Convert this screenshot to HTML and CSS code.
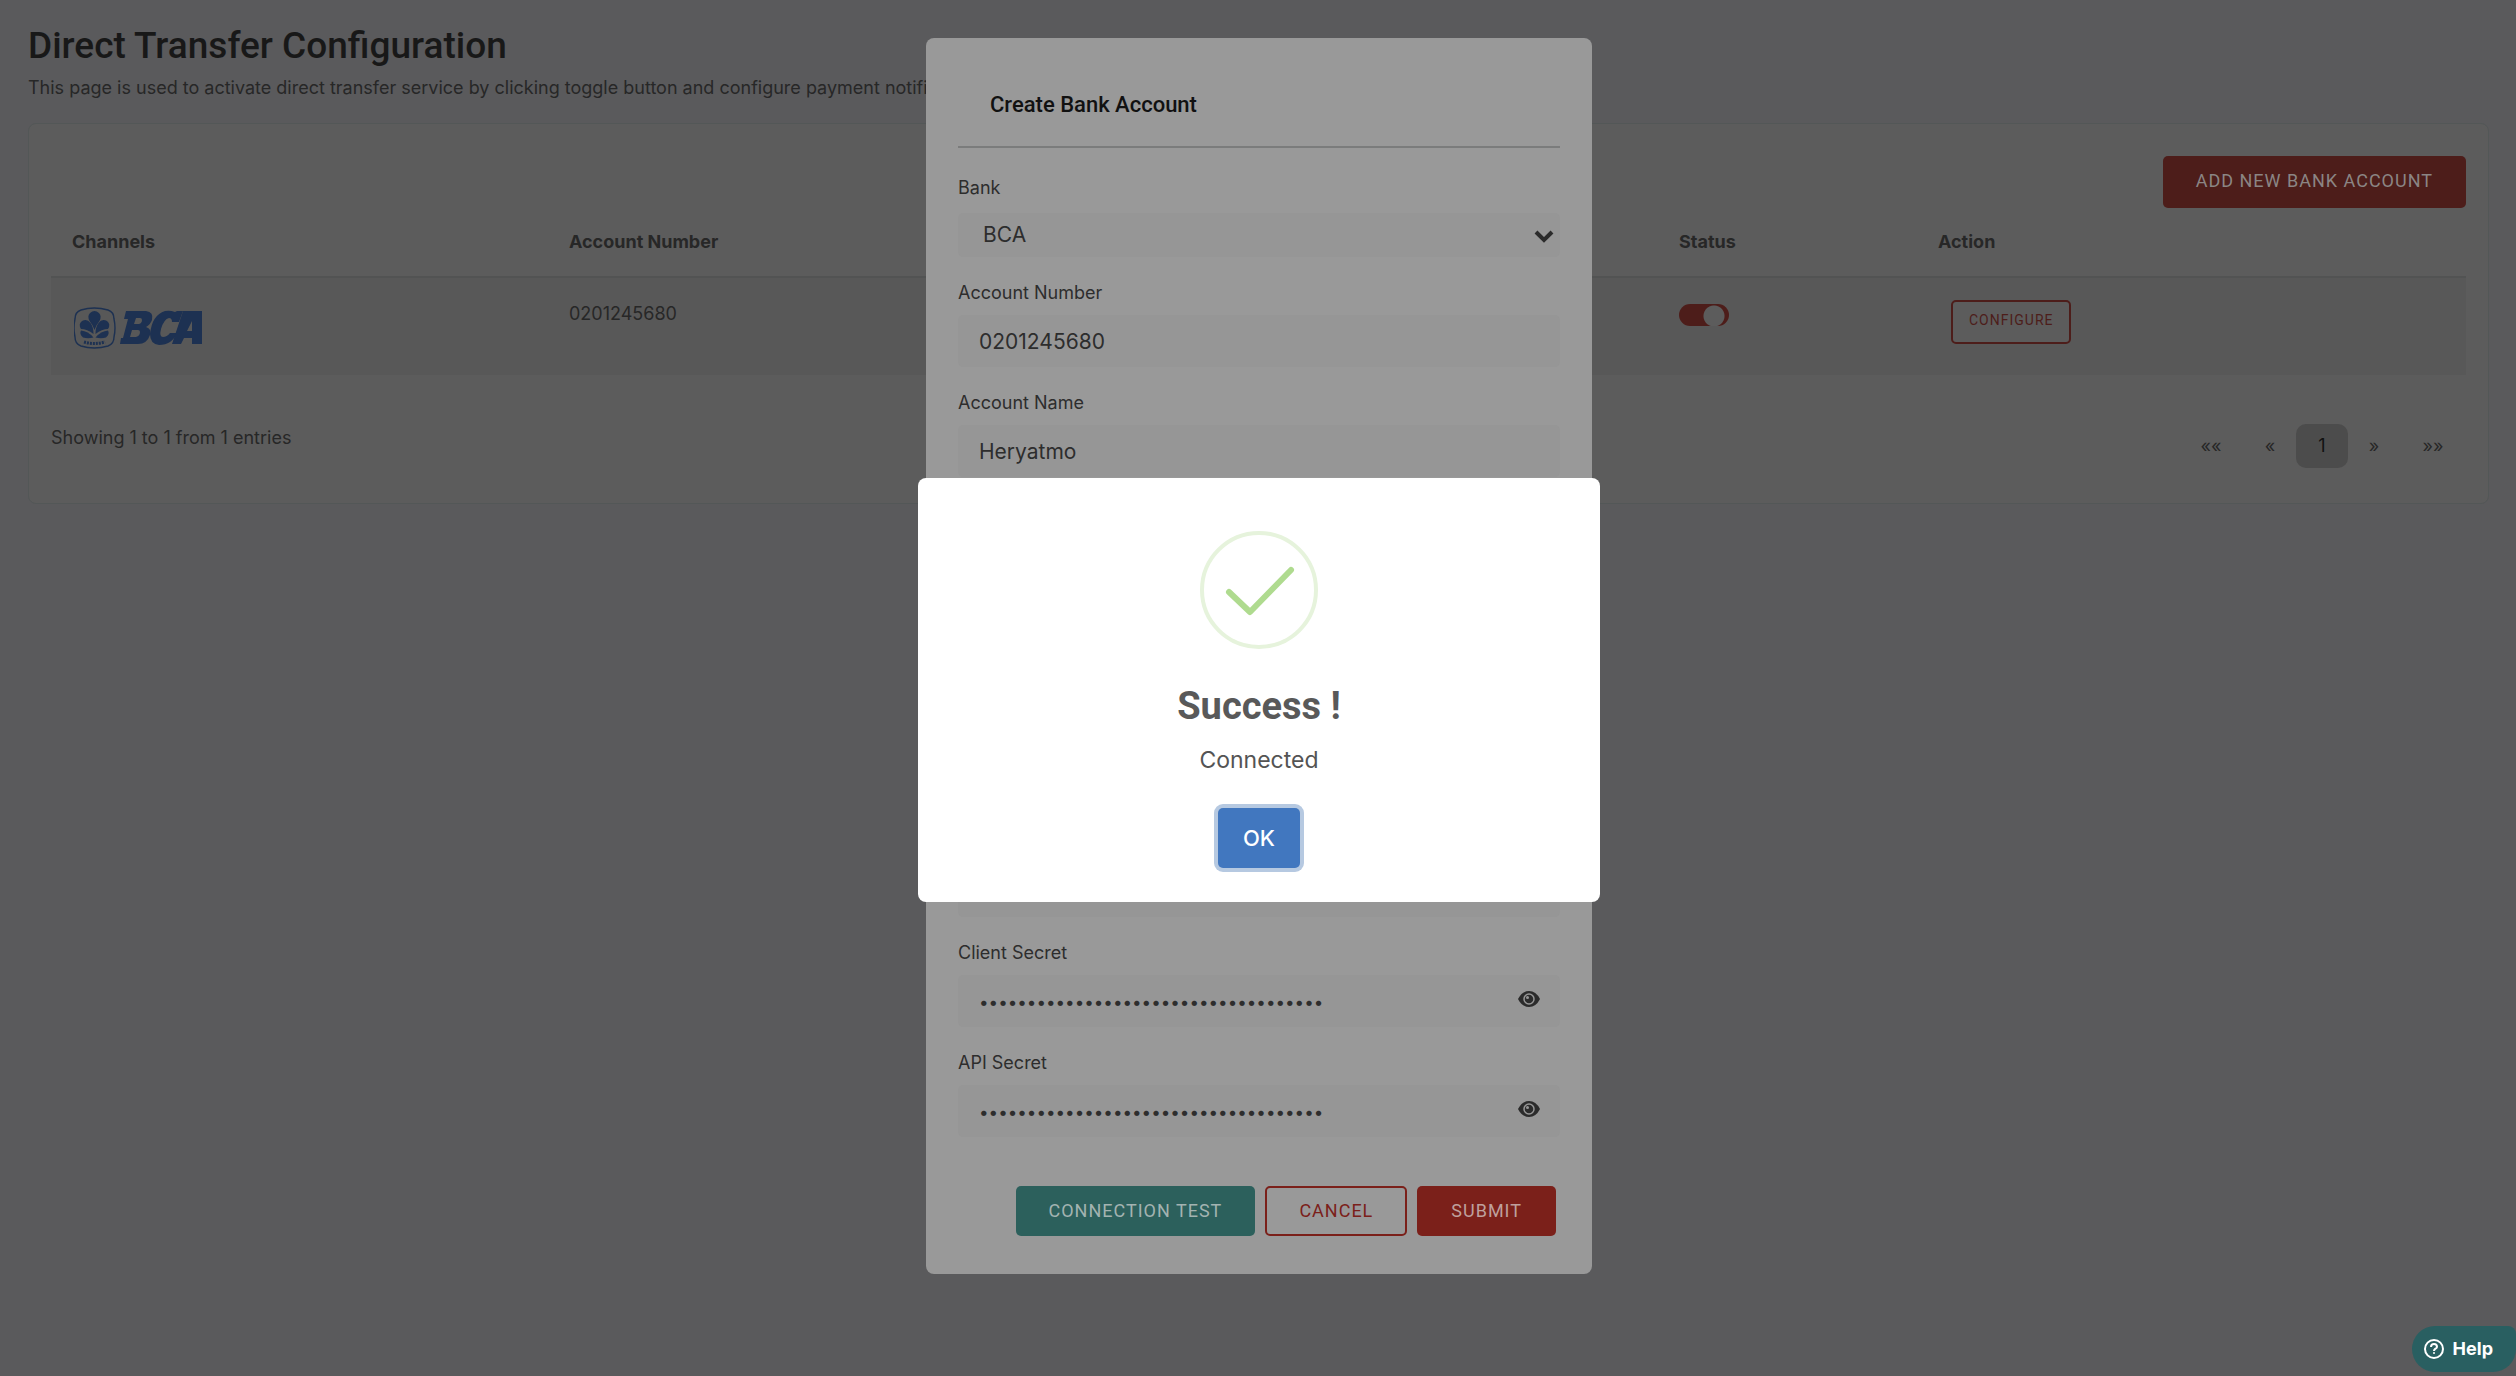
FILE: index.html
```html
<!DOCTYPE html>
<html lang="en">
<head>
<meta charset="utf-8">
<meta name="viewport" content="width=device-width, initial-scale=1">
<title>Direct Transfer Configuration</title>
<link rel="stylesheet" href="styles.css">
</head>
<body>
<main class="page">
  <h1 class="page-title">Direct Transfer Configuration</h1>
  <p class="page-lead">This page is used to activate direct transfer service by clicking toggle button and configure payment notification.</p>
  <section class="card">
    <div class="card-actions">
      <button type="button" class="btn btn-add">ADD NEW BANK ACCOUNT</button>
    </div>
    <table class="accounts">
      <colgroup><col class="col-channel"><col class="col-number"><col class="col-name"><col class="col-status"><col></colgroup>
      <thead>
        <tr><th>Channels</th><th>Account Number</th><th>Account Name</th><th>Status</th><th>Action</th></tr>
      </thead>
      <tbody>
        <tr>
          <td>
            <svg class="bank-logo" viewBox="0 0 130 42" role="img" aria-label="BCA">
              <path d="M7 3Q20-1 34 3Q40 5 40 12Q42 21 40 30Q40 37 34 39Q20 43 7 39Q1 37 1 30Q-1 21 1 12Q1 5 7 3Z" fill="none" stroke="#1d3152" stroke-width="1.4"/>
              <g fill="#1d3152">
                <path d="M20.500 23Q19 18 15.500 14Q13 9 16 6Q20.500 2 25 6Q28 9 25.500 14Q22 18 20.500 23Z"/>
                <path d="M19.500 27Q13 22 7 22Q4 17 8 14Q13 11 16.500 16Q19.500 20 19.500 27Z"/>
                <path d="M21.500 27Q28 22 34 22Q37 17 33 14Q28 11 24.500 16Q21.500 20 21.500 27Z"/>
                <path d="M19.500 30.500Q14 32 9 30.500Q5 27 7 23.500Q14 24 19.500 30.500Z"/>
                <path d="M21.500 30.500Q27 32 32 30.500Q36 27 34 23.500Q27 24 21.500 30.500Z"/>
              </g>
              <path d="M10 35Q20 38 31 35" fill="none" stroke="#1d3152" stroke-width="3" stroke-dasharray="2 1"/>
              <g fill="#1d3152" fill-rule="evenodd">
                <path d="M52 4H72Q80 5 78 13Q76 18 72 20Q78 22 76 28Q73 37 64 37H46L47 31H49L54 12H50ZM62 11L60 17H65Q68 16 68 13Q68 11 66 11ZM58 23L56 30H62Q66 29 66 25Q66 23 64 23Z"/>
                <path d="M109 4L105 15H98Q98 11 95 11Q90 12 87 22Q85 30 89 30Q93 30 96 26H103Q98 38 85 38Q76 37 76 27Q78 8 91 4Q96 3 101 5L103 4Z"/>
                <path d="M109 4H128V37H118V31H110L107 37H98ZM118 14L113 24H118Z"/>
              </g>
            </svg>
          </td>
          <td>0201245680</td>
          <td>Heryatmo</td>
          <td><input type="checkbox" class="switch" role="switch" aria-label="Status" checked></td>
          <td><button type="button" class="btn btn-configure">CONFIGURE</button></td>
        </tr>
      </tbody>
    </table>
    <footer class="card-footer">
      <p class="summary">Showing 1 to 1 from 1 entries</p>
      <nav class="pager" aria-label="Pages">
        <a class="pager-link" href="#">««</a>
        <a class="pager-link pager-near" href="#">«</a>
        <a class="pager-link pager-current" href="#" aria-current="page">1</a>
        <a class="pager-link pager-near" href="#">»</a>
        <a class="pager-link" href="#">»»</a>
      </nav>
    </footer>
  </section>
</main>

<div class="modal-layer">
  <form class="modal" aria-label="Create Bank Account">
    <h2 class="modal-title">Create Bank Account</h2>
    <div class="field">
      <label for="bank">Bank</label>
      <div class="control">
        <select id="bank" class="input input-select"><option>BCA</option></select>
        <svg class="chevron" viewBox="0 0 20 14" aria-hidden="true"><path d="M2 3l8 8 8-8" fill="none" stroke="#2b2b2b" stroke-width="4"/></svg>
      </div>
    </div>
    <div class="field"><label for="number">Account Number</label><input id="number" class="input" type="text" value="0201245680"></div>
    <div class="field"><label for="holder">Account Name</label><input id="holder" class="input" type="text" value="Heryatmo"></div>
    <div class="field"><label for="corporate">Corporate ID</label><input id="corporate" class="input" type="text"></div>
    <div class="field"><label for="key">API Key</label><input id="key" class="input" type="text"></div>
    <div class="field"><label for="branch">Branch</label><input id="branch" class="input" type="text"></div>
    <div class="field"><label for="client">Client ID</label><input id="client" class="input" type="text"></div>
    <div class="field">
      <label for="client-secret">Client Secret</label>
      <div class="control">
        <input id="client-secret" class="input input-secret" type="password" value="123456789012345678901234567890123456">
        <button type="button" class="reveal" aria-label="Show client secret"><svg class="eye" viewBox="0 0 22 16" aria-hidden="true"><path d="M0 8Q4 0 11 0T22 8Q18 16 11 16T0 8Z" fill="#2b2b2b"/><circle cx="11" cy="8" r="5" fill="none" stroke="#969696" stroke-width="1.500"/><circle cx="9.500" cy="6.500" r="1.500" fill="#969696"/></svg></button>
      </div>
    </div>
    <div class="field">
      <label for="api-secret">API Secret</label>
      <div class="control">
        <input id="api-secret" class="input input-secret" type="password" value="123456789012345678901234567890123456">
        <button type="button" class="reveal" aria-label="Show API secret"><svg class="eye" viewBox="0 0 22 16" aria-hidden="true"><path d="M0 8Q4 0 11 0T22 8Q18 16 11 16T0 8Z" fill="#2b2b2b"/><circle cx="11" cy="8" r="5" fill="none" stroke="#969696" stroke-width="1.500"/><circle cx="9.500" cy="6.500" r="1.500" fill="#969696"/></svg></button>
      </div>
    </div>
    <div class="modal-actions">
      <button type="button" class="btn btn-test">CONNECTION TEST</button>
      <button type="button" class="btn btn-cancel">CANCEL</button>
      <button type="submit" class="btn btn-submit">SUBMIT</button>
    </div>
  </form>
</div>

<div class="alert-layer">
  <div class="alert" role="alertdialog" aria-labelledby="alert-title">
    <svg class="alert-icon" viewBox="0 0 118 118" aria-hidden="true">
      <circle cx="59" cy="59" r="57" fill="none" stroke="#e6f3dc" stroke-width="4"/>
      <path d="M29 61l21 20 41-42" fill="none" stroke="#afdb8f" stroke-width="6" stroke-linecap="round" stroke-linejoin="round"/>
    </svg>
    <h2 class="alert-title" id="alert-title">Success !</h2>
    <p class="alert-text">Connected</p>
    <button type="button" class="alert-ok">OK</button>
  </div>
</div>

<button type="button" class="help">
  <svg class="help-icon" viewBox="0 0 22 22" aria-hidden="true"><g fill="none" stroke="#fff" stroke-width="2"><circle cx="11" cy="11" r="9"/><path d="M8 9q0-3 3-3t3 3q0 1-2 2-1 1-1 2"/></g><circle cx="11" cy="15" r="1" fill="#fff"/></svg>
  Help
</button>
</body>
</html>
```
FILE: styles.css
```css
* { box-sizing: border-box; }

body {
  margin: 0;
  min-height: 100vh;
  background: #5a5a5c;
  color: #272727;
  font: 18px/24px Inter, "Liberation Sans", sans-serif;
}

h1, h2, p { margin: 0; }
button, input, select { font: inherit; color: inherit; }
button { cursor: pointer; }

/* Page */
.page { padding: 26px 27px 26px 28px; }

.page-title {
  font: 500 37px/40px Roboto, sans-serif;
  color: #181818;
}

.page-lead { margin-top: 10px; }

.card {
  margin-top: 23px;
  padding: 32px 22px 35px;
  background: #5c5c5c;
  border: 1px solid #535757;
  border-radius: 8px;
}

.card-actions { display: flex; justify-content: flex-end; }

.btn {
  padding: 0 33px;
  border: 0;
  border-radius: 5px;
  font: 400 18px/24px Roboto, sans-serif;
  letter-spacing: 1px;
}

.btn-add {
  height: 52px;
  padding-bottom: 3px;
  background: #4d1d1a;
  color: #8b8584;
}

/* Accounts table */
.accounts {
  width: 100%;
  border-collapse: collapse;
  table-layout: fixed;
}

.col-channel { width: 497px; }
.col-number { width: 555px; }
.col-name { width: 555px; }
.col-status { width: 259px; }

.accounts th {
  height: 69px;
  padding: 0 21px;
  border-bottom: 2px solid #525353;
  text-align: left;
  font-weight: 700;
}

.accounts td {
  height: 98px;
  padding: 24px 21px 0;
  background: #585858;
  vertical-align: top;
}

.bank-logo {
  display: block;
  width: 130px;
  height: 42px;
  margin: 5px 0 0 2px;
}

.switch {
  appearance: none;
  display: block;
  width: 50px;
  height: 22px;
  margin: 2px 0 0;
  border-radius: 11px;
  background: radial-gradient(circle at 35px 12px, #5c5c5c 10px, #4d1d1a 11px);
}

.btn-configure {
  display: block;
  height: 44px;
  margin: -2px 0 0 13px;
  padding: 0 16px 5px;
  border: 2px solid #4d1d1a;
  background: #5c5c5c;
  color: #4d1d1a;
  font-size: 14px;
}

.card-footer {
  display: flex;
  justify-content: space-between;
  align-items: center;
  margin-top: 49px;
}

.summary { padding-bottom: 16px; }

.pager { display: flex; }

.pager-link {
  width: 66px;
  color: inherit;
  text-align: center;
  text-decoration: none;
  line-height: 44px;
}

.pager-near { width: 52px; }

.pager-current {
  width: 52px;
  border-radius: 10px;
  background: #4c4c4c;
  color: #111;
}

/* Form dialog */
.modal-layer {
  position: absolute;
  inset: 0 0 auto;
  display: flex;
  justify-content: center;
  padding: 38px 16px 38px 18px;
}

.modal {
  width: 666px;
  padding: 32px 32px 38px;
  background: #999;
  border-radius: 8px;
  color: #2d2d2d;
}

.modal-title {
  padding: 23px 32px 29px;
  margin-bottom: 28px;
  border-bottom: 2px solid #7b7c7c;
  color: #111;
  font: 500 22px/24px Roboto, sans-serif;
}

.field { margin-bottom: 24px; }
.field label { display: block; margin-bottom: 10px; }
.field label[for="bank"] { margin-bottom: 13px; }

.control { position: relative; }

.input {
  display: block;
  width: 100%;
  height: 52px;
  padding: 0 21px;
  border: 0;
  border-radius: 5px;
  background: #969696;
  font-size: 21px;
}

.input-select {
  height: 44px;
  padding: 0 25px;
  appearance: none;
}

.input-secret { padding: 2px 60px 0 21px; font-size: 17px; }

.chevron {
  position: absolute;
  top: 16px;
  right: 6px;
  width: 20px;
  height: 14px;
  pointer-events: none;
}

.reveal {
  position: absolute;
  top: 16px;
  right: 20px;
  display: flex;
  padding: 0;
  border: 0;
  background: none;
}

.eye { width: 22px; height: 16px; }

.modal-actions {
  display: flex;
  justify-content: flex-end;
  gap: 10px;
  margin-top: 49px;
  padding-right: 4px;
}

.modal-actions .btn { height: 50px; }
.btn-test { background: #2c605c; color: #a3b3b1; }
.btn-cancel { padding: 0 32px; border: 2px solid #7b201a; background: #999; color: #7b201a; }
.btn-submit { padding: 0 34px; background: #7b201a; color: #bfa09d; }

/* Result alert */
.alert-layer {
  position: fixed;
  inset: 0;
  display: flex;
  justify-content: center;
  align-items: center;
  padding: 4px 0 0 2px;
}

.alert {
  display: flex;
  flex-direction: column;
  align-items: center;
  width: 682px;
  padding: 53px 32px 34px;
  background: #fff;
  border-radius: 8px;
  color: #545454;
}

.alert-icon { width: 118px; height: 118px; }

.alert-title {
  margin-top: 33px;
  font: 700 38px/48px Roboto, sans-serif;
  color: #595959;
}

.alert-text {
  margin-top: 14px;
  font-size: 23px;
  line-height: 32px;
}

.alert-ok {
  margin-top: 32px;
  height: 60px;
  padding: 0 25px;
  border: 0;
  border-radius: 5px;
  background: #4177bf;
  box-shadow: 0 0 0 4px #b6c9e1;
  color: #fff;
  font-size: 22px;
  font-weight: 500;
}

/* Help launcher */
.help {
  position: fixed;
  right: 0;
  bottom: 4px;
  display: flex;
  align-items: center;
  gap: 8px;
  height: 46px;
  padding: 0 23px 0 11px;
  border: 0;
  border-radius: 23px 8px 23px 23px;
  background: #295f61;
  color: #fff;
  font-weight: 700;
}

.help-icon { width: 22px; height: 22px; }
```
